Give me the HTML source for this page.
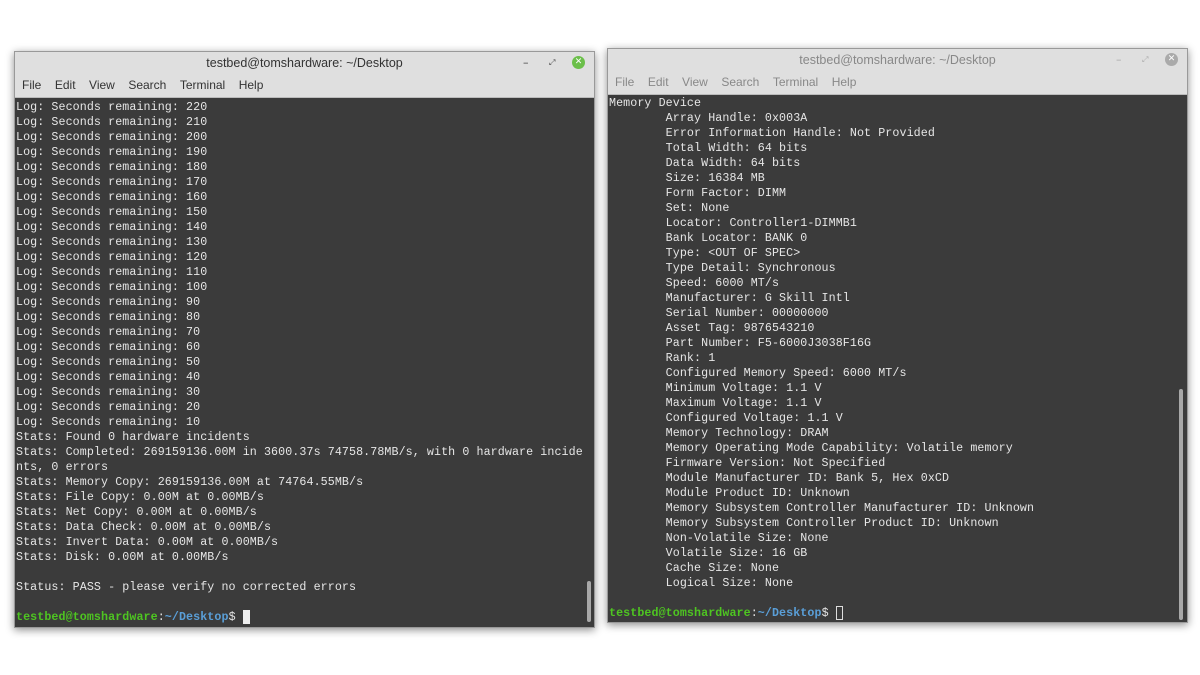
<!DOCTYPE html>
<html><head><meta charset="utf-8"><style>
html,body{margin:0;padding:0;background:#fff;width:1200px;height:675px;overflow:hidden;position:relative}
.win{position:absolute;background:#3b3b3b;box-shadow:0 2px 8px rgba(0,0,0,.45);border:1px solid #999}
.title{position:absolute;left:0;right:0;top:0;height:22px;background:#dfdfdf;font:12.5px "Liberation Sans",sans-serif;color:#333;text-align:center;line-height:22px}
.menu{position:absolute;left:0;right:0;top:22px;height:23px;background:#dfdfdf;font:12px "Liberation Sans",sans-serif;color:#333;line-height:23px;border-bottom:1px solid #bbb;padding-left:0}
.menu span{margin-left:7px;margin-right:6.5px}
.term{position:absolute;left:1px;top:48px;font:11.67px/15px "Liberation Mono",monospace;letter-spacing:0.09px;color:#e6e6e6;white-space:pre;margin:0}
.g{color:#4ec521;font-weight:bold}.b{color:#5a9fd8;font-weight:bold}
.sb{position:absolute;width:4px;background:#a8a8a8;border-radius:2px}
.ctl{position:absolute;top:4px;font:11px "DejaVu Sans",sans-serif;color:#444}
.x{position:absolute;top:4px;width:13px;height:13px;border-radius:50%;color:#fff;font:bold 9px/13px "DejaVu Sans",sans-serif;text-align:center}
.in .title,.in .menu{color:#888}
</style></head><body>
<div class="win" style="left:14px;top:51px;width:579px;height:575px">
 <div class="title">testbed@tomshardware: ~/Desktop</div>
 <div class="ctl" style="left:508px">–</div><div class="ctl" style="left:534px;font-size:8px;top:6px">⤢</div>
 <div class="x" style="left:557px;background:#6bbf4a">✕</div>
 <div class="menu"><span>File</span><span>Edit</span><span>View</span><span>Search</span><span>Terminal</span><span>Help</span></div>
<pre class="term">Log: Seconds remaining: 220
Log: Seconds remaining: 210
Log: Seconds remaining: 200
Log: Seconds remaining: 190
Log: Seconds remaining: 180
Log: Seconds remaining: 170
Log: Seconds remaining: 160
Log: Seconds remaining: 150
Log: Seconds remaining: 140
Log: Seconds remaining: 130
Log: Seconds remaining: 120
Log: Seconds remaining: 110
Log: Seconds remaining: 100
Log: Seconds remaining: 90
Log: Seconds remaining: 80
Log: Seconds remaining: 70
Log: Seconds remaining: 60
Log: Seconds remaining: 50
Log: Seconds remaining: 40
Log: Seconds remaining: 30
Log: Seconds remaining: 20
Log: Seconds remaining: 10
Stats: Found 0 hardware incidents
Stats: Completed: 269159136.00M in 3600.37s 74758.78MB/s, with 0 hardware incide
nts, 0 errors
Stats: Memory Copy: 269159136.00M at 74764.55MB/s
Stats: File Copy: 0.00M at 0.00MB/s
Stats: Net Copy: 0.00M at 0.00MB/s
Stats: Data Check: 0.00M at 0.00MB/s
Stats: Invert Data: 0.00M at 0.00MB/s
Stats: Disk: 0.00M at 0.00MB/s

Status: PASS - please verify no corrected errors

<span class="g">testbed@tomshardware</span>:<span class="b">~/Desktop</span>$ <span style="background:#eee">&nbsp;</span></pre>
 <div class="sb" style="left:572px;top:529px;height:41px"></div>
</div>
<div class="win in" style="left:607px;top:48px;width:579px;height:573px">
 <div class="title">testbed@tomshardware: ~/Desktop</div>
 <div class="ctl" style="left:508px;color:#aaa">–</div><div class="ctl" style="left:534px;font-size:8px;top:6px;color:#aaa">⤢</div>
 <div class="x" style="left:557px;background:#aaa">✕</div>
 <div class="menu"><span>File</span><span>Edit</span><span>View</span><span>Search</span><span>Terminal</span><span>Help</span></div>
<pre class="term" style="top:47px">Memory Device
        Array Handle: 0x003A
        Error Information Handle: Not Provided
        Total Width: 64 bits
        Data Width: 64 bits
        Size: 16384 MB
        Form Factor: DIMM
        Set: None
        Locator: Controller1-DIMMB1
        Bank Locator: BANK 0
        Type: &lt;OUT OF SPEC&gt;
        Type Detail: Synchronous
        Speed: 6000 MT/s
        Manufacturer: G Skill Intl
        Serial Number: 00000000
        Asset Tag: 9876543210
        Part Number: F5-6000J3038F16G
        Rank: 1
        Configured Memory Speed: 6000 MT/s
        Minimum Voltage: 1.1 V
        Maximum Voltage: 1.1 V
        Configured Voltage: 1.1 V
        Memory Technology: DRAM
        Memory Operating Mode Capability: Volatile memory
        Firmware Version: Not Specified
        Module Manufacturer ID: Bank 5, Hex 0xCD
        Module Product ID: Unknown
        Memory Subsystem Controller Manufacturer ID: Unknown
        Memory Subsystem Controller Product ID: Unknown
        Non-Volatile Size: None
        Volatile Size: 16 GB
        Cache Size: None
        Logical Size: None

<span class="g">testbed@tomshardware</span>:<span class="b">~/Desktop</span>$ <span style="outline:1px solid #ddd;outline-offset:-1px">&nbsp;</span></pre>
 <div class="sb" style="left:571px;top:340px;height:231px"></div>
</div>
</body></html>
